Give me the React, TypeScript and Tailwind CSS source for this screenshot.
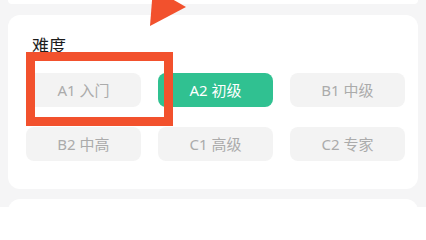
import React from "react"

const levels = [
  { code: "A1", label: "入门" },
  { code: "A2", label: "初级" },
  { code: "B1", label: "中级" },
  { code: "B2", label: "中高" },
  { code: "C1", label: "高级" },
  { code: "C2", label: "专家" },
]

export default function App() {
  const selected = "A2"
  return (
    <div
      className="relative h-[207px] w-[426px] overflow-hidden bg-[#f5f5f6]"
      style={{ fontFamily: '"Noto Sans", "Noto Sans CJK SC", sans-serif' }}
    >
      {/* previous card edge */}
      <div className="mx-2 h-[4px] rounded-b-xl bg-white" />

      {/* difficulty card */}
      <div className="mx-2 mt-[11px] h-[174px] rounded-xl bg-white pl-[18px] pr-[12px] pt-[20px]">
        <h2 className="ml-[6px] text-[17px] leading-[22px] text-[#1c1c1c]">难度</h2>
        <div className="mt-[16px] grid grid-cols-[115px_115px_115px] gap-x-[17px] gap-y-[20px]">
          {levels.map((l) => (
            <button
              key={l.code}
              className={
                l.code === selected
                  ? "h-[34px] rounded-lg bg-[#30c191] text-[15px] text-white"
                  : "h-[34px] rounded-lg bg-[#f3f3f3] text-[15px] text-[#ababab]"
              }
            >
              {l.code} {l.label}
            </button>
          ))}
        </div>
      </div>

      {/* next card edge */}
      <div className="mx-2 mt-[10px] h-[20px] rounded-t-xl bg-white" />

      {/* annotation overlays */}
      <div className="absolute left-[26px] top-[52px] h-[74px] w-[147px] border-[9px] border-[#f2512d]" />
      <svg className="absolute left-0 top-0" width="426" height="207">
        <polygon points="150,26 153,-12 186,7" fill="#f2512d" />
      </svg>
    </div>
  )
}
